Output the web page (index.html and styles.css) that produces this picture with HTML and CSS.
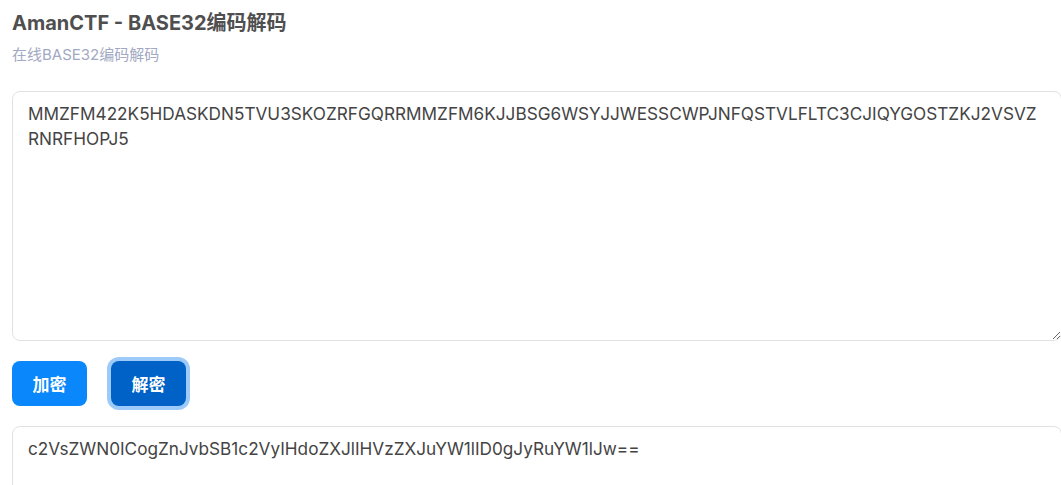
FILE: index.html
```html
<!DOCTYPE html>
<html lang="zh-CN">
<head>
<meta charset="utf-8">
<title>AmanCTF - BASE32编码解码</title>
<link rel="stylesheet" href="styles.css">
</head>
<body>
<div class="page">
  <header class="head">
    <h1 class="title">AmanCTF - BASE32编码解码</h1>
    <p class="subtitle">在线BASE32编码解码</p>
  </header>
  <textarea class="box box-input">MMZFM422K5HDASKDN5TVU3SKOZRFGQRRMMZFM6KJJBSG6WSYJJWESSCWPJNFQSTVLFLTC3CJIQYGOSTZKJ2VSVZRNRFHOPJ5</textarea>
  <div class="actions">
    <button class="btn btn-encode" type="button">加密</button>
    <button class="btn btn-decode" type="button">解密</button>
  </div>
  <textarea class="box box-output">c2VsZWN0ICogZnJvbSB1c2VyIHdoZXJlIHVzZXJuYW1lID0gJyRuYW1lJw==</textarea>
</div>
</body>
</html>
```

FILE: styles.css
```css
html, body {
  margin: 0;
  padding: 0;
  overflow: hidden;
  background: #ffffff;
}

body {
  font-family: Inter, "Noto Sans CJK SC", sans-serif;
  color: #444;
}

.page {
  padding: 8px 12px 0 12px;
  display: flex;
  flex-direction: column;
  align-items: flex-start;
}

.head {
  margin-bottom: 26px;
}

.title {
  margin: 0;
  font-size: 20px;
  font-weight: 700;
  line-height: 30px;
  color: #4f4f4f;
}

.subtitle {
  margin: 7px 0 0 0;
  font-size: 15px;
  line-height: 20px;
  color: #a2a9c2;
}

.box {
  box-sizing: border-box;
  width: 1050px;
  border: 1px solid #e2e2e2;
  border-radius: 8px;
  padding: 9px 18px 8px 15px;
  font-family: Inter, "Noto Sans CJK SC", sans-serif;
  font-size: 17.2px;
  line-height: 25px;
  color: #444;
  background: #fff;
  outline: none;
  resize: vertical;
}

.box-input {
  height: 250px;
}

.box-output {
  margin-top: 20px;
  height: 120px;
}

.actions {
  display: flex;
  gap: 24px;
  margin-top: 20px;
}

.btn {
  height: 45px;
  padding: 0 20.5px;
  border: none;
  border-radius: 8px;
  font-family: Inter, "Noto Sans CJK SC", sans-serif;
  font-size: 17px;
  font-weight: 700;
  color: #fff;
  cursor: pointer;
}

.btn-encode {
  background: #0a88fb;
}

.btn-decode {
  background: #0062c6;
  box-shadow: 0 0 0 4px #9ccbfb;
}
```
